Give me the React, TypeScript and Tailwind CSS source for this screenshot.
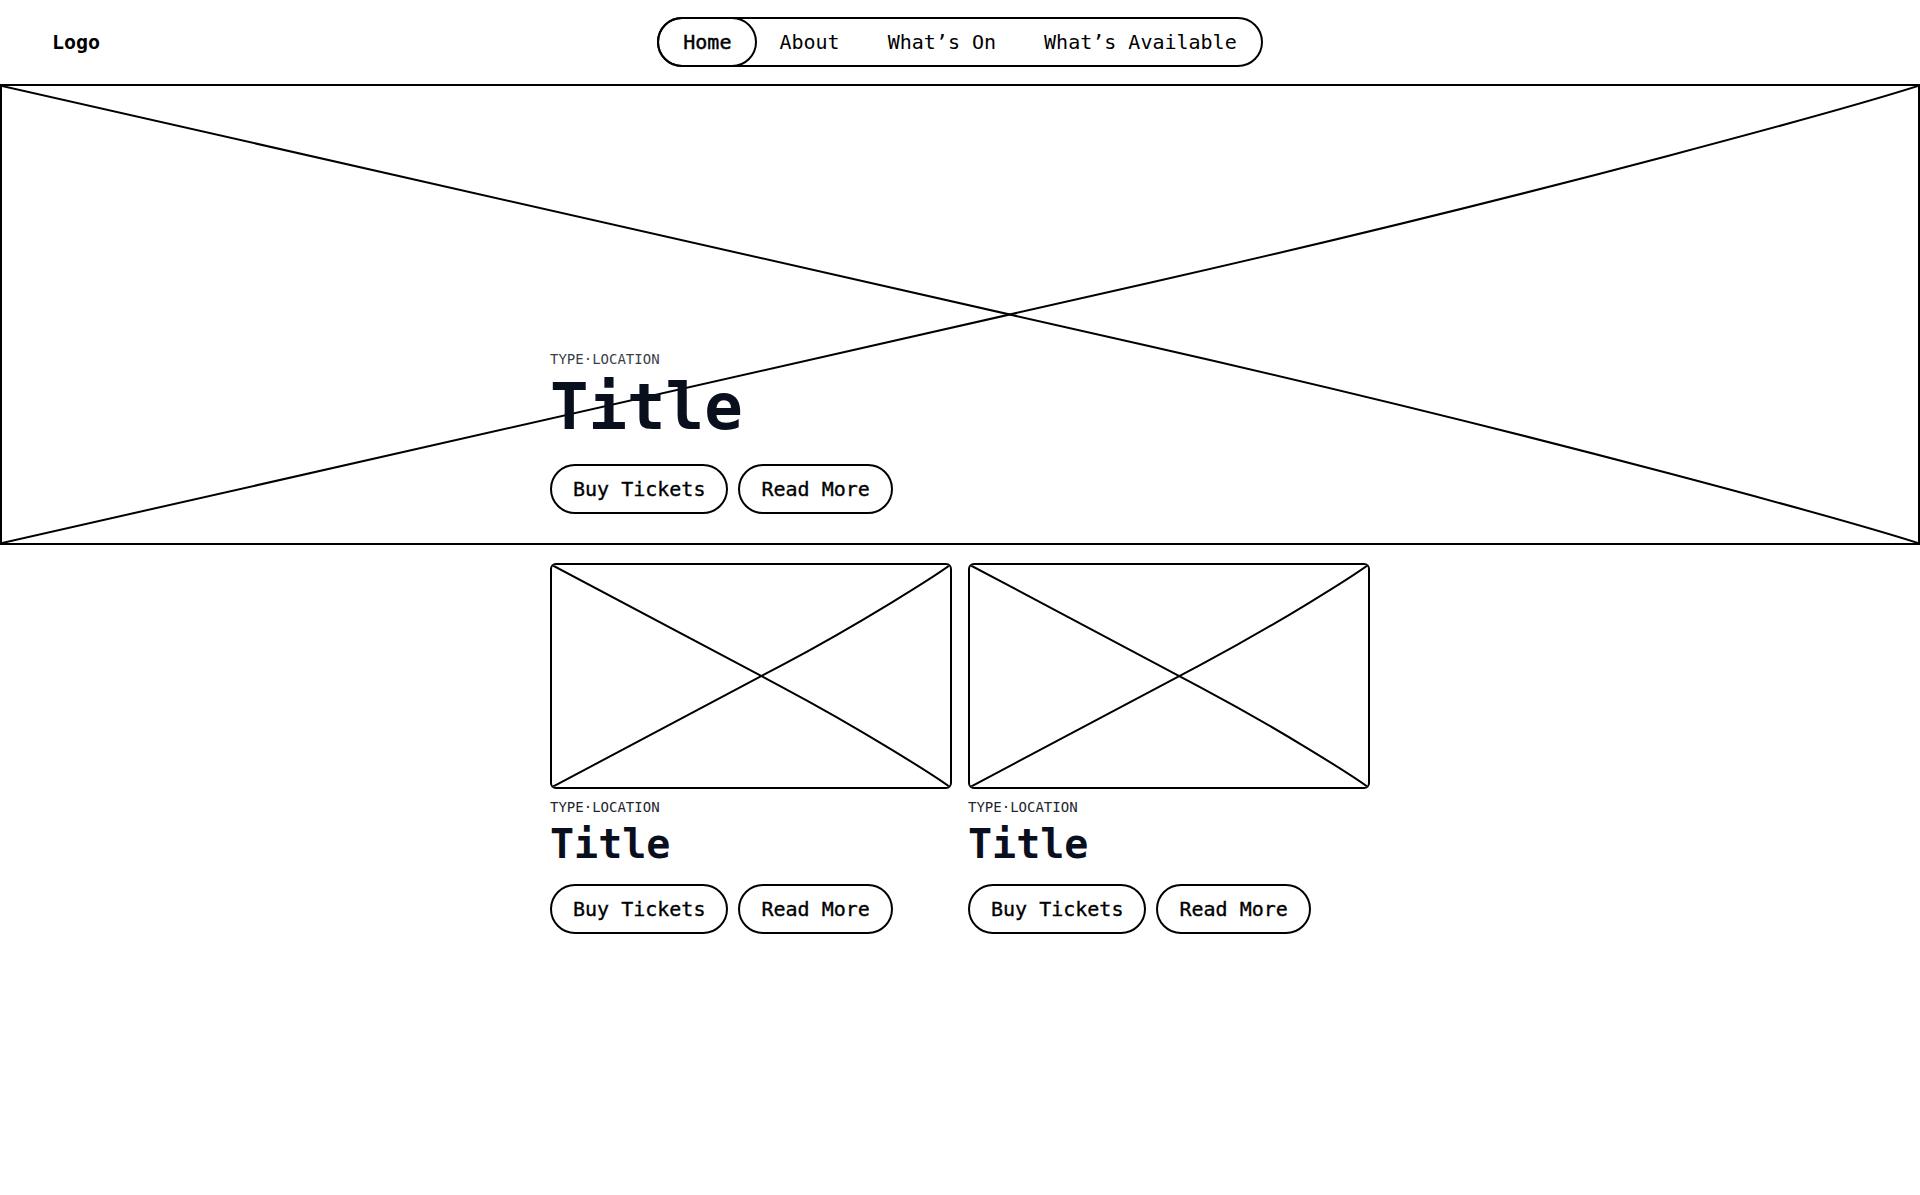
import React from "react";

const MONO = "font-['DejaVu_Sans_Mono','Liberation_Mono',monospace]";

function Placeholder({ w, h, x0, c1, c2 }: { w: number; h: number; x0: number; c1: number; c2: number }) {
  const cross = w * 0.526;
  const s = h / 2 / cross;
  const y0 = s * x0;
  const y1 = s * c1;
  const endSlope = 1.4 * s;
  const y2 = h - (w - c2) * endSlope;
  const a = `M0,0 L${x0},${y0} C${c1},${y1} ${c2},${y2} ${w},${h}`;
  const b = `M0,${h} L${x0},${h - y0} C${c1},${h - y1} ${c2},${h - y2} ${w},0`;
  return (
    <svg
      className="absolute inset-0 h-full w-full"
      viewBox={`0 0 ${w} ${h}`}
      preserveAspectRatio="none"
      fill="none"
    >
      <path d={a} stroke="#000" strokeWidth="2" vectorEffect="non-scaling-stroke" />
      <path d={b} stroke="#000" strokeWidth="2" vectorEffect="non-scaling-stroke" />
    </svg>
  );
}

const btn = `${MONO} rounded-full border-2 border-black bg-white px-[21px] py-[9px] text-[20px] leading-7 text-black [-webkit-text-stroke:0.35px_black]`;

function Buttons() {
  return (
    <div className="flex gap-[10px]">
      <button className={btn}>Buy Tickets</button>
      <button className={btn}>Read More</button>
    </div>
  );
}

function Card() {
  return (
    <div className="flex flex-col">
      <div className="relative aspect-video w-full overflow-hidden rounded-md border-2 border-black">
        <Placeholder w={398} h={222} x0={230} c1={310} c2={384} />
      </div>
      <div className={`${MONO} mt-2 text-sm leading-5 text-[#22262f]`}>TYPE·LOCATION</div>
      <h2 className={`${MONO} mt-[7px] text-[40px] font-bold leading-none text-[#0a0f1e]`}>Title</h2>
      <div className="mt-5">
        <Buttons />
      </div>
    </div>
  );
}

export default function App() {
  const navItem = `${MONO} px-6 py-[11px] text-[20px] leading-6 text-black`;
  return (
    <div className="min-h-[1195px] w-full bg-white">
      <header className="relative flex h-[84px] items-center justify-center px-12">
        <div className={`${MONO} absolute left-[52px] top-1/2 -translate-y-1/2 text-[20px] font-bold leading-7 text-black`}>
          Logo
        </div>
        <nav className="flex items-center rounded-full border-2 border-black">
          <a className={`${navItem} -m-[2px] rounded-full border-2 border-black [-webkit-text-stroke:0.45px_black]`}>Home</a>
          <a className={navItem}>About</a>
          <a className={navItem}>What’s On</a>
          <a className={navItem}>What’s Available</a>
        </nav>
      </header>

      <section className="relative flex h-[461px] w-full flex-col justify-end border-2 border-black">
        <Placeholder w={1916} h={457} x0={1150} c1={1560} c2={1860} />
        <div className="relative mx-auto w-[820px] pb-[29px]">
          <div className={`${MONO} text-sm leading-5 text-[#3a3f4a]`}>TYPE·LOCATION</div>
          <h1 className={`${MONO} mt-[6px] text-[64px] font-bold leading-none text-[#0a0f1e]`}>Title</h1>
          <div className="mt-[25px]">
            <Buttons />
          </div>
        </div>
      </section>

      <section className="mx-auto grid w-[820px] grid-cols-2 gap-4 pt-[18px]">
        <Card />
        <Card />
      </section>
    </div>
  );
}
